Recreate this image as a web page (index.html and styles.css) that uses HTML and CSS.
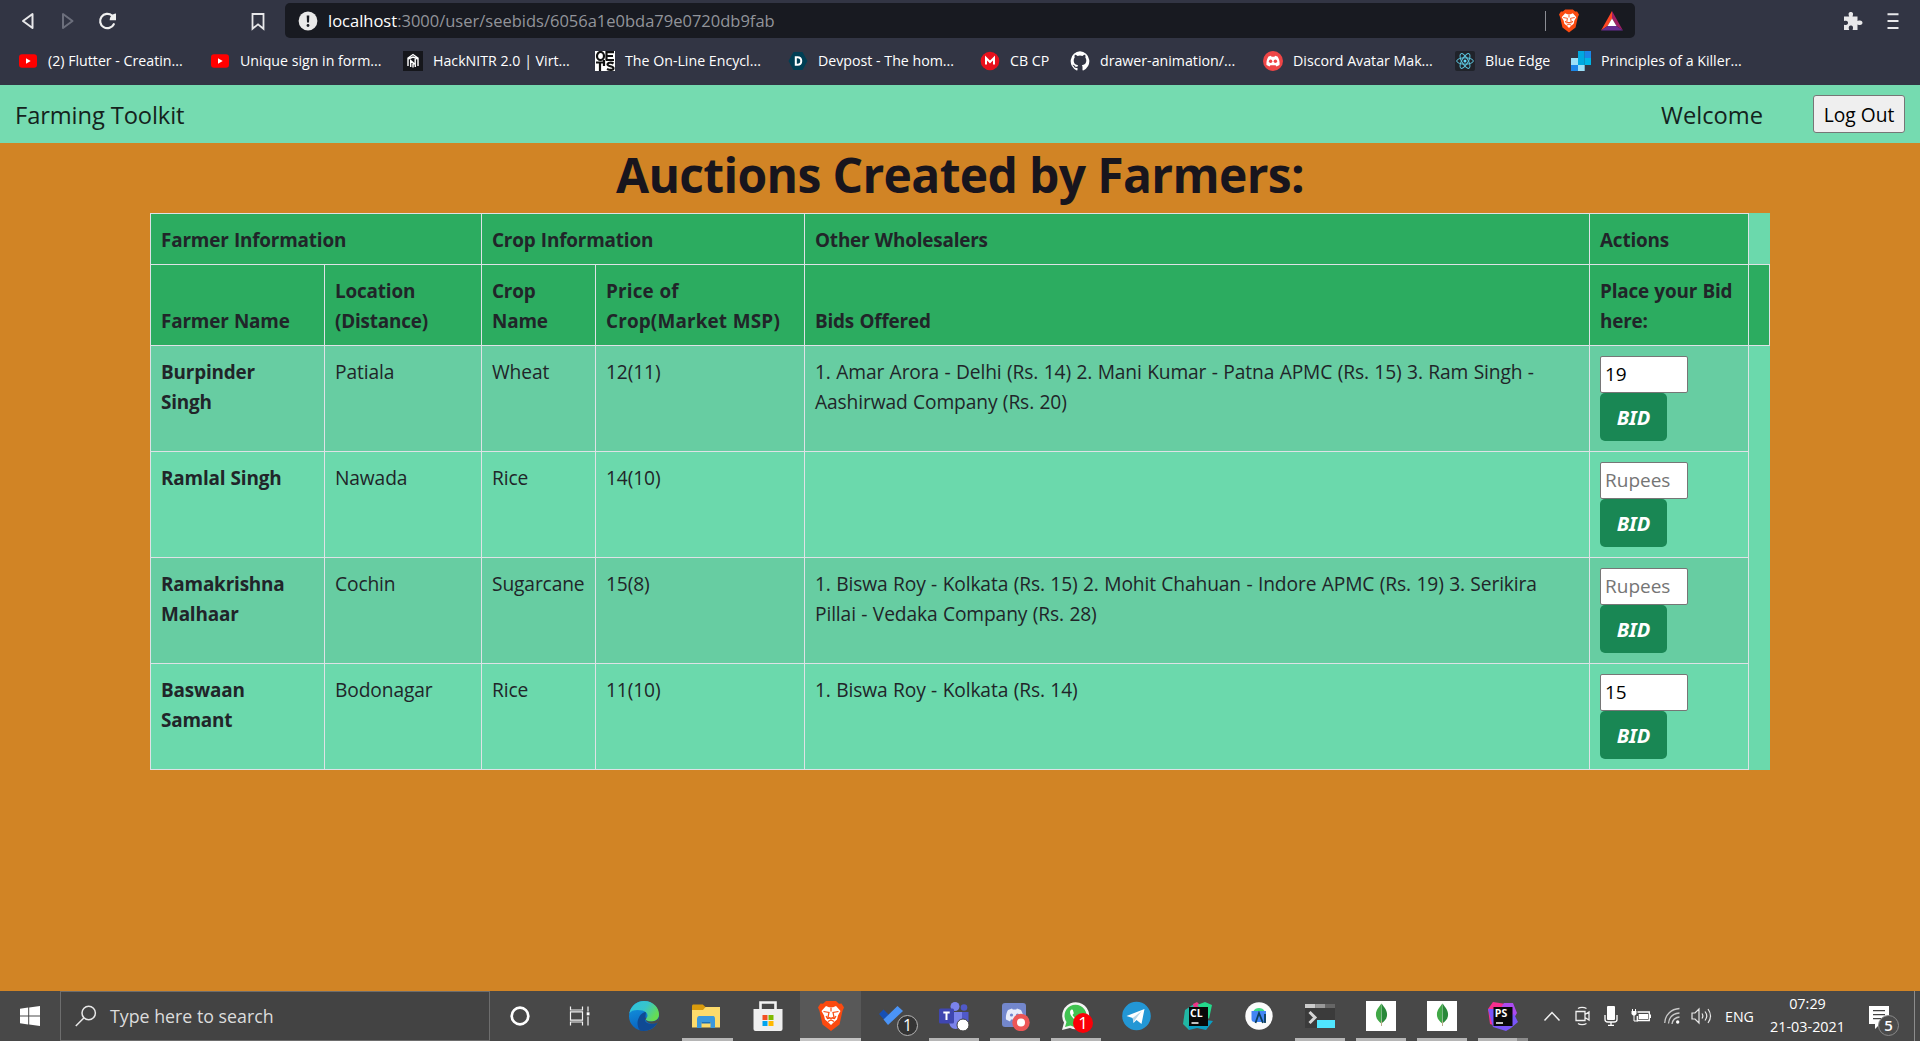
FILE: index.html
```html
<!DOCTYPE html>
<html lang="en">
<head>
<meta charset="utf-8">
<title>Farming Toolkit</title>
<link rel="stylesheet" href="styles.css">
</head>
<body>
<div class="screen">
  <header class="browser">
    <div class="toolbar">
      <div class="nav-buttons">
        <svg width="18" height="20" viewBox="0 0 18 20"><path d="M13.500 3v14L4 10z" fill="none" stroke="#e8e8ea" stroke-width="2" stroke-linejoin="round"/></svg>
        <svg width="18" height="20" viewBox="0 0 18 20"><path d="M5 3v14l9.500-7z" fill="none" stroke="#6c6f7c" stroke-width="2" stroke-linejoin="round"/></svg>
        <svg width="20" height="20" viewBox="0 0 20 20"><path d="M16.800 13.200A7.200 7.200 0 1 1 15 4.500" fill="none" stroke="#f0f0f0" stroke-width="2.200" stroke-linecap="round"/><path d="M19 2.500v6.800h-6.300c-.3-3 2.500-6.800 6.300-6.800z" fill="#f0f0f0"/></svg>
      </div>
      <svg class="mark" width="16" height="20" viewBox="0 0 16 20"><path d="M2.500 3h11v14.800L8 13.300l-5.500 4.500z" fill="none" stroke="#e8e8ea" stroke-width="1.800"/></svg>
      <div class="address">
        <svg width="20" height="20" viewBox="0 0 20 20"><circle cx="10" cy="10" r="9.400" fill="#e9e9e9"/><path d="M8.700 4.500h2.600l-.3 7H9z" fill="#181a21"/><circle cx="10" cy="14.500" r="1.400" fill="#181a21"/></svg>
        <span class="url"><b>localhost</b>:3000/user/seebids/6056a1e0bda79e0720db9fab</span>
        <span class="divider"></span>
        <svg class="shield" width="20" height="24" viewBox="0 0 26 30"><use href="#brave"/></svg>
        <svg width="24" height="22" viewBox="0 0 24 22"><path d="M12 1v7.500L7.500 16 1 20.500z" fill="#ff4724"/><path d="M12 1v7.500l4.500 7.500 6.500 4.500z" fill="#9e1f63"/><path d="M1 20.500 7.500 16h9l6.500 4.500z" fill="#662d91"/><path d="M12 8.500 7.500 16h9z" fill="#fff"/></svg>
      </div>
      <div class="menu-buttons">
        <svg width="20" height="20" viewBox="0 0 20 20"><path d="M1 5.500h5.200C4.700 2 6.200 1 7.800 1s3.100 1 1.700 4.500h5V10c3.500-1.300 5 .2 5 1.800s-1.500 3.200-5 1.700V19H9.600c1.200-3.300-.2-4.500-1.700-4.500S5 15.700 6.200 19H1v-5.200c3 .9 4-.4 4-2s-1-2.800-4-1.800z" fill="#e8e8ea"/></svg>
        <svg width="12" height="20" viewBox="0 0 12 20"><path d="M.5 3.200h11M.5 10h11M.5 17h11" stroke="#e8e8ea" stroke-width="2"/></svg>
      </div>
    </div>
    <nav class="bookmarks">
      <a><svg viewBox="0 0 20 20"><use href="#youtube"/></svg>(2) Flutter - Creatin...</a>
      <a><svg viewBox="0 0 20 20"><use href="#youtube"/></svg>Unique sign in form...</a>
      <a><svg viewBox="0 0 20 20"><rect width="20" height="20" fill="#15161b"/><path d="M5 15V7l5-3.500L15 7v8M5 8l5-2 5 2M7.700 16V9.500l4.500 4V8M10 16.500v-4M12.300 16v-2" fill="none" stroke="#fff" stroke-width="1.400"/></svg>HackNITR 2.0 | Virt...</a>
      <a><svg viewBox="0 0 20 20"><rect width="20" height="20" fill="#fff"/><ellipse cx="5.500" cy="5" rx="3.500" ry="4" fill="none" stroke="#111" stroke-width="2.200"/><path d="M11.500 0v9.500M11 1.200h8M11 5h7M11 9h8M1 11.500h8M5 11.500V20M9 9v6" stroke="#111" stroke-width="2.200"/><path d="M18.500 12.500c-2-1.300-6-1-6 1s6 1.500 6 3.700-4 2-6.500.7" fill="none" stroke="#111" stroke-width="2.200"/></svg>The On-Line Encycl...</a>
      <a><svg viewBox="0 0 20 20"><path d="M5.500 1h9L19.500 10l-5 9h-9L.5 10z" fill="#003e54"/><path d="M7.800 6.200v7.600h1.700c5 0 5-7.600 0-7.600z" fill="none" stroke="#fff" stroke-width="2"/></svg>Devpost - The hom...</a>
      <a><svg viewBox="0 0 20 20"><circle cx="10" cy="10" r="9.300" fill="#e8101c"/><path d="M6 13.500V7l4 4 4-4v6.500" fill="none" stroke="#fff" stroke-width="2"/></svg>CB CP</a>
      <a><svg viewBox="0 0 20 20"><path d="M10 .3a10 10 0 0 0-3.200 19.200c.5.100.7-.2.700-.5v-2c-2.800.6-3.400-1.200-3.400-1.200-.4-1.100-1.100-1.400-1.100-1.400-.9-.7.100-.7.100-.7 1 .1 1.500 1 1.500 1 .9 1.600 2.400 1.100 3 .9 0-.6.300-1.100.6-1.400-2.200-.2-4.500-1.100-4.500-4.900 0-1.100.4-2 1-2.700-.1-.3-.4-1.300.1-2.700 0 0 .8-.3 2.700 1a9.600 9.600 0 0 1 5 0c1.900-1.300 2.700-1 2.700-1 .5 1.400.2 2.400.1 2.700.6.700 1 1.600 1 2.700 0 3.800-2.300 4.700-4.500 4.900.4.300.7 1 .7 1.900V19c0 .300.2.600.7.500A10 10 0 0 0 10 .3z" fill="#fff"/></svg>drawer-animation/...</a>
      <a><svg viewBox="0 0 20 20"><circle cx="10" cy="10" r="10" fill="#ee4546"/><path d="M5.500 5.500 8 4.800l.5.900h3l.5-.9 2.500.7c2 3 2.300 6 2 8.500l-3 1.500-.9-1.300H7.400l-.9 1.300-3-1.500c-.3-3 .2-5.700 2-8.500z" fill="#fff"/><circle cx="7.600" cy="10.200" r="1.700" fill="#ee4546"/><circle cx="12.400" cy="10.200" r="1.700" fill="#ee4546"/></svg>Discord Avatar Mak...</a>
      <a><svg viewBox="0 0 20 20"><rect width="20" height="20" rx="2" fill="#20232a"/><g fill="none" stroke="#5cc5de" stroke-width="1"><ellipse cx="10" cy="10" rx="8.300" ry="3.200"/><ellipse cx="10" cy="10" rx="8.300" ry="3.200" transform="rotate(60 10 10)"/><ellipse cx="10" cy="10" rx="8.300" ry="3.200" transform="rotate(120 10 10)"/></g><circle cx="10" cy="10" r="1.500" fill="#61dafb"/></svg>Blue Edge</a>
      <a><svg viewBox="0 0 20 20"><path d="M7 0h6.700v7H7zM7 7h6.700v7H7z" fill="#00a9e0"/><path d="M13.700 0H20v7h-6.300zM0 14h7v6H0z" fill="#1b86e8"/><path d="M13.700 7H20v7h-6.300z" fill="#00b5e6"/><path d="M0 7h7v7H0zM7 14h6.700v6H7z" fill="#9be0f8"/></svg>Principles of a Killer...</a>
    </nav>
  </header>

  <div class="navbar">
    <span class="brand">Farming Toolkit</span>
    <span class="welcome">Welcome</span>
    <button class="logout">Log Out</button>
  </div>

  <main class="page">
    <h1>Auctions Created by Farmers:</h1>
    <table class="auctions">
      <colgroup><col class="c-farmer"><col class="c-location"><col class="c-crop"><col class="c-price"><col class="c-bids"><col class="c-action"><col class="c-end"></colgroup>
      <thead>
        <tr><th colspan="2">Farmer Information</th><th colspan="2">Crop Information</th><th>Other Wholesalers</th><th>Actions</th></tr>
        <tr><th>Farmer Name</th><th>Location (Distance)</th><th>Crop Name</th><th class="price-head">Price of Crop(Market MSP)</th><th>Bids Offered</th><th>Place your Bid here:</th><th></th></tr>
      </thead>
      <tbody>
        <tr><th>Burpinder<br>Singh</th><td>Patiala</td><td>Wheat</td><td>12(11)</td><td>1. Amar Arora - Delhi (Rs. 14) 2. Mani Kumar - Patna APMC (Rs. 15) 3. Ram Singh -<br>Aashirwad Company (Rs. 20)</td><td><div class="bid-form"><input type="text" placeholder="Rupees" value="19"><button>BID</button></div></td></tr>
        <tr><th>Ramlal Singh</th><td>Nawada</td><td>Rice</td><td>14(10)</td><td></td><td><div class="bid-form"><input type="text" placeholder="Rupees"><button>BID</button></div></td></tr>
        <tr><th>Ramakrishna Malhaar</th><td>Cochin</td><td>Sugarcane</td><td>15(8)</td><td>1. Biswa Roy - Kolkata (Rs. 15) 2. Mohit Chahuan - Indore APMC (Rs. 19) 3. Serikira<br>Pillai - Vedaka Company (Rs. 28)</td><td><div class="bid-form"><input type="text" placeholder="Rupees"><button>BID</button></div></td></tr>
        <tr><th>Baswaan Samant</th><td>Bodonagar</td><td>Rice</td><td>11(10)</td><td>1. Biswa Roy - Kolkata (Rs. 14)</td><td><div class="bid-form"><input type="text" placeholder="Rupees" value="15"><button>BID</button></div></td></tr>
      </tbody>
    </table>
  </main>

  <footer class="taskbar">
    <div class="start"><svg width="20" height="20" viewBox="0 0 20 20"><path d="M0 2.700 8.200 1.500v8H0zM9.200 1.400 20 0v9.500H9.200zM0 10.500h8.200v8L0 17.300zM9.200 10.500H20V20L9.200 18.600z" fill="#fff"/></svg></div>
    <div class="search">
      <svg width="22" height="22" viewBox="0 0 22 22"><circle cx="13.700" cy="8" r="6.700" fill="none" stroke="#e8e8e8" stroke-width="1.500"/><path d="M9 12.700.8 21" stroke="#e8e8e8" stroke-width="1.500"/></svg>
      <span>Type here to search</span>
    </div>
    <div class="system">
      <svg width="20" height="20" viewBox="0 0 20 20"><circle cx="10" cy="10" r="8.300" fill="none" stroke="#fff" stroke-width="2.700"/></svg>
      <svg width="22" height="20" viewBox="0 0 22 20"><path d="M1.500.5v3.500h12V.5M1.500 19.500V16h12v3.500M1.500 5.800h12v8.400h-12zM19 .5v5M19 10.500v9" fill="none" stroke="#f2f2f2" stroke-width="1.200"/><path d="M17.700 6.300h2.800v3h-2.800z" fill="#fff"/></svg>
    </div>
    <div class="apps">
      <div class="app">
        <svg width="30" height="30" viewBox="0 0 30 30"><defs><linearGradient id="edgeTop" x1="0" x2="1" y2=".5"><stop offset="0" stop-color="#2bc2df"/><stop offset=".55" stop-color="#38c4cb"/><stop offset="1" stop-color="#66dc52"/></linearGradient><linearGradient id="edgeBody" y1="0" x2=".3" y2="1"><stop offset="0" stop-color="#139be4"/><stop offset="1" stop-color="#0a62be"/></linearGradient></defs><circle cx="15" cy="15" r="15" fill="url(#edgeBody)"/><path d="M11 29.500C5 22 11 11 17 11l-1 9c3 4 8 3.500 12.500 1.500C25.500 27 18 31.500 11 29.500z" fill="#0f4a94"/><path d="M.3 12.500C2 4 9 0 15 0c10 0 15 7.500 15 13.500 0 5-4 7-8 7s-6.500-1.700-4.500-3.500c2.500-3 0-6.500-4-7.500C8 8.200 2 9 .3 12.500z" fill="url(#edgeTop)"/><path d="M17.500 17c-2 1.800.5 3.500 4.500 3.500 3 0 6.200-.7 8-4.500l-1 5.500c-6 3-13 .5-13-5z" fill="#4a4a4a"/></svg>
      </div>
      <div class="app open"><svg width="28" height="26" viewBox="0 0 28 26"><path d="M0 3.200C0 2 .5 1.500 1.500 1.500h9.300L13.500 4v5H0z" fill="#d99b0c"/><path d="M0 7h11l2.500-3H28v20.500H0z" fill="#fddb6b"/><path d="M5 25V16c0-2 1-3 3-3h12.500c2 0 2.500 1 2.500 3v9h-4.500v-6h-9v6z" fill="#3b98dc"/><path d="M9.500 19h9v1.500h-9z" fill="#1c6fb5"/></svg></div>
      <div class="app"><svg width="30" height="30" viewBox="0 0 30 30"><path d="M7.500 9V1.500h15V9" fill="none" stroke="#f3f3f3" stroke-width="2.600"/><path d="M.5 8h29v20a2 2 0 0 1-2 2h-25a2 2 0 0 1-2-2z" fill="#efefef"/><path d="M9.500 14h5v5h-5z" fill="#f25022"/><path d="M15.500 14h5v5h-5z" fill="#7fba00"/><path d="M9.500 20h5v5h-5z" fill="#00a4ef"/><path d="M15.500 20h5v5h-5z" fill="#ffb900"/></svg></div>
      <div class="app open active"><svg width="26" height="30" viewBox="0 0 26 30"><g id="brave"><path d="m8 0-3 2.800L2.500 2.500 0 6.500l1.500 3.500 3 13.500L13 30l8.500-6.500 3-13.500L26 6.500l-2.500-4-2.500.3L18 0z" fill="#fb4a10"/><path d="m8 5-4.500 5 2.500 4.500 1 4 3.500 3L13 24l2.500-2.500 3.500-3 1-4 2.500-4.500L18 5l-3 1.200h-4z" fill="#fff"/><path d="m5.500 10.500 5.500 1-1 4.500 3 1.500 3-1.500-1-4.500 5.500-1M13 6.500v4M8 15l1.500 2.500L13 17l3.500.5L18 15M10 20.500l3-1.500 3 1.500" fill="none" stroke="#fb4a10" stroke-width="1.200"/></g></svg></div>
      <div class="app"><svg width="25" height="20" viewBox="0 0 25 20"><path d="m0 8 4.500-4.500 9 9L9 18z" fill="#1650b4"/><path d="M4.500 13.500 18.500 0 24 5 9 19z" fill="#4b94f6"/></svg><span class="badge">1</span></div>
      <div class="app open"><svg width="30" height="30" viewBox="0 0 30 30"><circle cx="25" cy="6.500" r="3.300" fill="#5059c9"/><circle cx="16" cy="5.500" r="4.500" fill="#7b83eb"/><path d="M20 11h9.500v8c0 4-3 6-6 6z" fill="#5059c9"/><path d="M10 11h13v9c0 5-3 8-6.500 8S10 25 10 20z" fill="#7b83eb"/><rect y="7.500" width="15" height="15" rx="1.500" fill="#3f46b0"/><path d="M4.300 11.500h6.400M7.500 11.500v7.500" stroke="#fff" stroke-width="2"/><circle cx="24" cy="24" r="6" fill="#fff" stroke="#414141"/></svg></div>
      <div class="app open"><svg width="28" height="30" viewBox="0 0 28 30"><rect y="2" width="24" height="24" rx="3" fill="#7387cc"/><path d="m6 9 4-1.500.8 1h3.400l.8-1L19 9c2 3.500 2.400 6.500 2 9.500l-4 2-1-2H9l-1 2-4-2C3.600 15 4.300 12 6 9z" fill="#e8ecfa"/><circle cx="9.500" cy="14" r="1.600" fill="#7387cc"/><circle cx="15.500" cy="14" r="1.600" fill="#7387cc"/><circle cx="19" cy="21.500" r="8.700" fill="#ed5656"/><circle cx="19" cy="21.500" r="4" fill="#fff"/></svg></div>
      <div class="app open"><svg width="28" height="28" viewBox="0 0 28 28"><path d="M0 28 2 20.500A13.500 13.500 0 1 1 8 26z" fill="#f4f4f4"/><path d="m3 25 1.500-5A11 11 0 1 1 8.500 23.500z" fill="#40c351"/><path d="M9.500 7.500c-3 2-1 6 2 9s7 4.500 8.500 2l-3.500-2.500-2 1c-2-1-3-2.500-4-4l1.300-1.700-1-3.500z" fill="#fff"/></svg><span class="badge alert">1</span></div>
      <div class="app"><svg width="29" height="30" viewBox="0 0 29 30"><circle cx="14.500" cy="15" r="14.300" fill="#2397d5"/><path d="m4.500 15 18-7-3 15-5-4-3 3-.8-5z" fill="#fff"/><path d="m10.700 17 9-7-6 8-2.200 3.500z" fill="#b9d7e8"/></svg></div>
      <div class="app"><svg width="30" height="30" viewBox="0 0 30 30"><path d="M2 9 11 3l2 6-7 20-6-6z" fill="#21b7a4"/><path d="m10 3 4-2 4 4-7 3z" fill="#ee3389"/><path d="m14 4 8-3 7 3-3 14-8-10z" fill="#24d98c"/><path d="m5 24 18-5 7 1-7 9-9-2-8 2z" fill="#0b9fc4"/><rect x="6" y="6" width="19" height="19" fill="#090909"/><text x="7" y="15.500" class="ide">CL</text><path d="M8.500 22h7" stroke="#fff" stroke-width="1.500"/></svg></div>
      <div class="app"><svg width="28" height="28" viewBox="0 0 28 28"><circle cx="14" cy="14" r="13.700" fill="#fbfbfb"/><path d="M8.500 9a6 5 0 0 1 11 0z" fill="#3ddc84"/><path d="M6.500 9H21v11H9.500c-2 0-3-1-3-3z" fill="#4285f4"/><path d="m10.500 21 3.500-10 4 10M20 12v9" fill="none" stroke="#0d3f5c" stroke-width="1.800"/></svg></div>
      <div class="app open"><svg width="30" height="26" viewBox="0 0 30 26"><path d="M0 1h30v24H0z" fill="#3b3b3b"/><path d="M0 1h10.500v4H0z" fill="#ccc"/><path d="M10.500 1H20v4h-9.500z" fill="#999"/><path d="M20 1h10v4H20z" fill="#666"/><path d="m4.500 9 5.500 5.500L4.500 20" fill="none" stroke="#d5d5d5" stroke-width="3"/><path d="M12 17h18v8H12z" fill="#50e6ff"/></svg></div>
      <div class="app open"><svg width="30" height="30" viewBox="0 0 30 30"><g id="mongo"><path d="M0 0h30v30H0z" fill="#fff"/><path d="M15.500 2.500c-3 4-6 7-5.500 12 .3 4 3 6 5 7.700z" fill="#41a847"/><path d="M15.500 2.500c3 4 6 7 5.500 12-.3 4-3 6-5.500 7.700z" fill="#29883a"/><path d="M15.500 20v5" stroke="#b9aa8a"/></g></svg></div>
      <div class="app open"><svg width="30" height="30" viewBox="0 0 30 30"><use href="#mongo"/></svg></div>
      <div class="app open double"><svg width="30" height="30" viewBox="0 0 30 30"><path d="m0 8 5-7 13 2-6 8-7 13-3-1z" fill="#f62f8e"/><path d="m16 2 9 0 4 10-3 5-14-9z" fill="#ac4af0"/><path d="M0 8l8 0 6 15 12-10 4 8-7 6-5 3-13-4z" fill="#7955fa"/><rect x="5.500" y="6" width="19" height="19" fill="#090909"/><text x="6.800" y="15.500" class="ide">PS</text><path d="M8 22h7" stroke="#fff" stroke-width="1.500"/></svg></div>
    </div>
    <div class="tray">
      <svg width="18" height="12" viewBox="0 0 18 12"><path d="m1.500 10.500 7.500-8 7.500 8" fill="none" stroke="#f0f0f0" stroke-width="1.500"/></svg>
      <svg width="16" height="20" viewBox="0 0 16 20"><path d="M1 5.500h9v9H1zM10 8.500 14 6v8l-4-2.500M3 2.500C5 1 9 1 11.500 2.500M3 17.500c2 1.500 6 1.500 8.500 0" fill="none" stroke="#f0f0f0" stroke-width="1.300"/></svg>
      <svg width="14" height="20" viewBox="0 0 14 20"><rect x="3" width="8" height="14" rx="1" fill="#fff"/><path d="M1 9v4.500c0 2 1 2.500 3 2.500h6c2 0 3-.5 3-2.500V9M7 16v3.500M4 19.500h6" fill="none" stroke="#fff" stroke-width="1.300"/></svg>
      <svg width="20" height="16" viewBox="0 0 20 16"><path d="M6.500 4h11.800v8.500h-12V8" fill="none" stroke="#fff" stroke-width="1.300"/><path d="M7.700 6h9.300v5H7.700zM18.500 6.500H20v3.500h-1.500zM.5 3h5v3L4 7.500H2L.5 6z" fill="#fff"/><path d="M1.500 1v3M4.500 1v3M3 7v6h4" fill="none" stroke="#fff"/></svg>
      <svg width="16" height="18" viewBox="0 0 16 18"><path d="M.7 16C1 8 7 2 15.500 1.500M4.500 16.500C5 10.500 9 6.500 15.500 6M8 17c.5-4 3-6.500 7.500-7" fill="none" stroke="#c9c9c9" stroke-width="1.300"/><circle cx="13.700" cy="15" r="1.700" fill="#fff"/></svg>
      <svg width="21" height="18" viewBox="0 0 21 18"><path d="M1 6h3l4-4v14l-4-4H1zM11 6.500q1.700 2.500 0 5M14 4.500q3.500 4.500 0 9M17 2q5 7 0 14" fill="none" stroke="#e8e8e8" stroke-width="1.200"/></svg>
      <span class="lang">ENG</span>
      <div class="clock"><span>07:29</span><span>21-03-2021</span></div>
      <div class="notice"><svg width="20" height="24" viewBox="0 0 20 24"><path d="M0 0h20v18h-9l-5 5v-5H0z" fill="#fff"/><path d="M4 4.700h12M4 8.700h12M4 12.700h8" stroke="#444" stroke-width="1.300"/></svg><span class="badge">5</span></div>
    </div>
  </footer>
</div>
<svg width="0" height="0" class="defs"><defs><g id="youtube"><rect x="1" y="3.300" width="18" height="13.500" rx="3" fill="#f00"/><path d="m8 7.300 4.700 2.700L8 12.700z" fill="#fff"/></g></defs></svg>
</body>
</html>
```
FILE: styles.css
```css
* { box-sizing: border-box; }
body { margin: 0; font-family: "Open Sans", "Noto Sans", sans-serif; overflow: hidden; }
svg { display: block; flex: none; }
.defs { position: absolute; }

.screen { width: 1920px; height: 1041px; display: flex; flex-direction: column; background: #d18425; }

/* Browser chrome */
.browser { height: 85px; background: #323544; color: #fff; flex: none; }
.toolbar { display: flex; height: 41px; padding: 3px 21px 3px 19px; }
.nav-buttons { display: flex; align-items: center; gap: 21px; height: 35px; width: 231px; }
.mark { align-self: center; }
.address { width: 1350px; height: 35px; margin-left: 19px; padding: 0 11px 0 13px; border-radius: 5px; background: #181a21; display: flex; align-items: center; }
.url { font-size: 16.500px; line-height: 35px; margin-left: 10px; color: #92949a; flex: 1; }
.url b { font-weight: 400; color: #fff; }
.divider { width: 1px; height: 20px; background: #8b8d94; margin-right: 13px; }
.shield { margin-right: 21px; }
.menu-buttons { display: flex; align-items: center; gap: 24px; height: 35px; margin-left: auto; }
.bookmarks { display: grid; grid-template-columns: 192px 193px 192px 193px 192px 90px 193px 192px 116px 200px; padding: 9px 0 0 18px; font-size: 14.200px; line-height: 22px; white-space: nowrap; }
.bookmarks a { display: flex; align-items: center; gap: 10px; }
.bookmarks svg { width: 20px; height: 20px; }

/* Site navbar */
.navbar { height: 58px; flex: none; background: #75dbb0; display: flex; align-items: center; padding: 0 15px; color: #14231d; font-size: 23.700px; }
.brand { margin-right: auto; padding-top: 1px; letter-spacing: -0.100px; }
.welcome { margin-right: 50px; padding-top: 1px; }
.logout { width: 92px; height: 38px; padding: 0; font: 19.200px "Open Sans", sans-serif; border: 1.250px solid #767676; border-radius: 3px; background: #efefef; color: #000; }

/* Auctions */
.page { flex: 1; }
h1 { margin: 0; height: 70px; padding-top: 1px; text-align: center; font-size: 48px; line-height: 62px; letter-spacing: -0.650px; color: #18151d; }
.auctions { width: 1620px; margin-left: 150px; table-layout: fixed; border-collapse: collapse; background: #6bd9ac; color: #212529; font-size: 19.200px; letter-spacing: -0.120px; word-spacing: 0.600px; line-height: 30px; }
.c-farmer { width: 174px; }
.c-location { width: 157px; }
.c-crop { width: 114px; }
.c-price { width: 209px; }
.c-bids { width: 785px; }
.c-action { width: 159px; }
.c-end { width: 21px; }
.auctions th, .auctions td { border: 1px solid #dee2e6; padding: 11px 10px 9px; text-align: left; vertical-align: top; }
.auctions th { font-size: 18.900px; letter-spacing: -0.180px; }
.auctions thead th { vertical-align: bottom; background: #2cac60; }
.auctions .price-head { letter-spacing: 0.150px; padding-right: 4px; }
.auctions thead tr:first-child { height: 51px; }
.auctions thead tr:last-child { height: 81px; }
.auctions tbody tr { height: 106px; }
.auctions tbody tr:nth-child(odd) th, .auctions tbody tr:nth-child(odd) td { background: #67cda2; }
.auctions tbody td:last-child { padding-top: 10px; }
.bid-form { display: flex; flex-direction: column; align-items: flex-start; height: 85px; }
.bid-form input { width: 88px; height: 37px; padding: 0 4px 1px; border: 1px solid #767676; border-radius: 2px; font: 19px "Open Sans", sans-serif; background: #fff; color: #000; }
.bid-form input::placeholder { color: #757575; }
.bid-form button { width: 67px; height: 48px; padding: 0; border: 0; border-radius: 5px; background: #198754; color: #fff; font: italic 700 20px "Noto Sans", sans-serif; }

/* Taskbar */
.taskbar { height: 50px; flex: none; display: flex; background: #484848; color: #fff; }
.start { width: 60px; display: flex; align-items: center; padding-left: 20px; }
.search { width: 430px; display: flex; align-items: center; gap: 13px; padding-left: 14px; border: 1px solid #6d6d6d; background: #434343; color: #dcdcdc; font-size: 17.800px; }
.system { width: 124px; display: flex; align-items: center; gap: 39px; padding-left: 20px; }
.apps { display: grid; grid-template-columns: repeat(3, 62px) 61px 62px repeat(10, 61px); flex: none; }
.app { position: relative; display: flex; align-items: center; justify-content: center; }
.app.open::after { content: ""; position: absolute; left: 6px; right: 5px; bottom: 0; height: 3px; background: #b5b5b5; }
.app.active { background: #585858; }
.app.active::after { left: 0; right: 0; background: #c3c3c3; }
.app.double::after { background: linear-gradient(90deg, #b5b5b5 39px, #8a8a8a 39px); }
.app:nth-child(-n+3) svg { margin-right: 2px; }
.app:nth-child(5) svg { margin-right: 1px; }
.app:nth-child(7) svg { margin-left: 3px; }
.badge { position: absolute; left: 36px; top: 24px; width: 21px; height: 21px; border: 1px solid #b5b5b5; border-radius: 50%; background: #343434; color: #fff; font-size: 16px; line-height: 19px; text-align: center; }
.badge.alert { left: 28px; top: 22px; width: 20px; height: 20px; border: 0; background: #fb0007; font-size: 17px; line-height: 20px; }
.ide { font: 700 10.500px "Open Sans", sans-serif; fill: #fff; }
.tray { flex: 1; display: grid; grid-template-columns: 32px 29px 27px 33px 27px 33px 30px 107px 1fr; align-items: center; padding-left: 10px; margin-right: 5px; border-right: 1px solid #8c8c8c; }
.lang { font-size: 14.200px; margin-left: 1px; }
.clock { display: flex; flex-direction: column; align-items: center; font-size: 14.400px; line-height: 23px; margin-top: -2px; }
.notice { position: relative; width: 31px; height: 50px; padding-top: 15px; margin-left: 8px; }
.notice .badge { left: 9px; font-size: 15px; font-weight: 600; background: #4b4b4b; border-color: #8a8a8a; }
```
